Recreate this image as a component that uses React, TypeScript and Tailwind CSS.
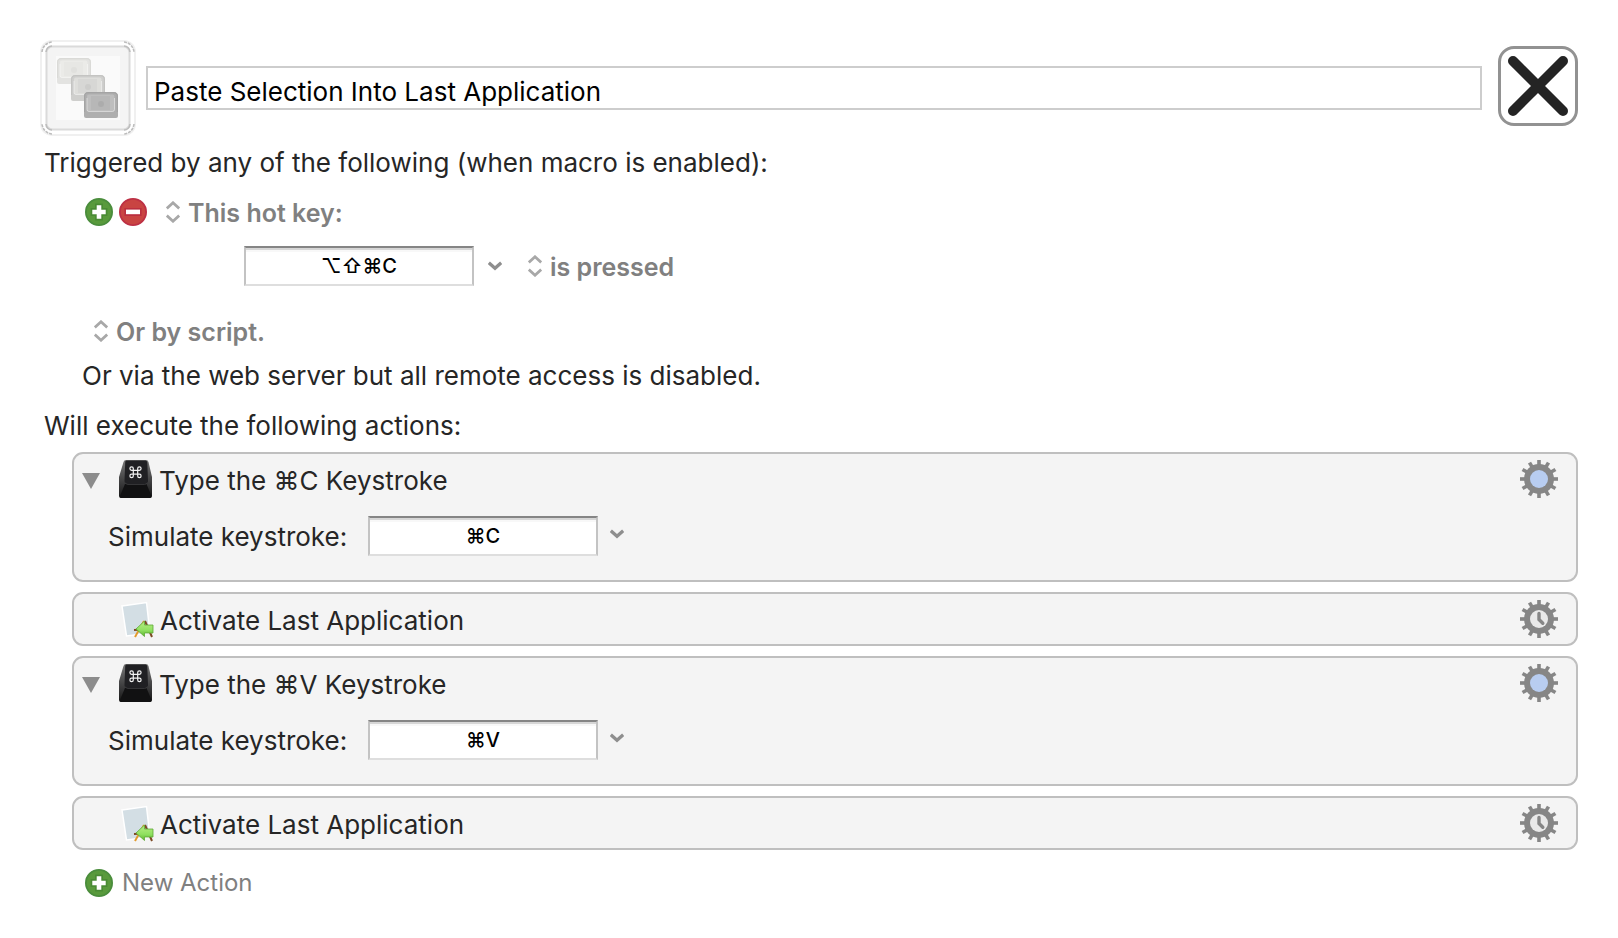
import React, { useState } from "react";

function AddIcon() {
  return (
    <svg viewBox="0 0 28 28" className="size-7" aria-hidden="true">
      <circle cx="14" cy="14" r="13.1" fill="#599a3c" stroke="#4a8d3c" strokeWidth="1.8" />
      <path d="M10 5.6h8v4.4h4.4v8H18v4.4h-8V18H5.6v-8H10z" fill="#4a8b34" />
      <path d="M11.7 7.3h4.6v4.4h4.4v4.6h-4.4v4.4h-4.6v-4.4H7.3v-4.6h4.4z" fill="#fff" />
    </svg>
  );
}

function RemoveIcon() {
  return (
    <svg viewBox="0 0 28 28" className="size-7" aria-hidden="true">
      <circle cx="14" cy="14" r="13.1" fill="#c94442" stroke="#bd3044" strokeWidth="1.8" />
      <path d="M5.4 10h17.2v8H5.4z" fill="#bb2f3f" />
      <path d="M7 11.6h14v4.6H7z" fill="#fff" />
    </svg>
  );
}

function UpDownIcon() {
  return (
    <svg viewBox="0 0 14 22" className="h-[22px] w-[14px]" fill="none" stroke="#a8a8a8" strokeWidth="2.8" aria-hidden="true">
      <path d="M.8 7.4 7 1.8l6.2 5.6M.8 14.6 7 20.2l6.2-5.6" />
    </svg>
  );
}

function ChevronIcon() {
  return (
    <svg viewBox="0 0 14 10" className="h-[10px] w-[14px]" fill="none" stroke="#8e8e8e" strokeWidth="3.4" aria-hidden="true">
      <path d="M.8 1.8 7 7.2l6.2-5.4" />
    </svg>
  );
}

function MacroIcon() {
  const keys = [
    { x: 17, y: 18, body: "#e3e3e1", top: "#ebebe8", edge: "#dadad7" },
    { x: 31, y: 35, body: "#cfcfcd", top: "#dededb", edge: "#c4c4c2" },
    { x: 44, y: 52, body: "#afafaf", top: "#bebebe", edge: "#a4a4a4" },
  ];
  return (
    <svg viewBox="0 0 96 96" className="size-24" aria-hidden="true">
      <rect x="1" y="1" width="94" height="94" rx="11" fill="#fff" stroke="#f0f0f0" strokeWidth="2" />
      <rect x="6.5" y="6.5" width="83" height="83" rx="6" fill="#f4f4f4" stroke="#dadada" strokeWidth="2" />
      <g fill="none" stroke="#bdbdbd" strokeWidth="1.6">
        <path d="M2 12a11 11 0 0 1 10-10M84 2a11 11 0 0 1 10 10M94 84a11 11 0 0 1-10 10M12 94A11 11 0 0 1 2 84" strokeDasharray="3 1" />
        <path d="M6 12a6 6 0 0 1 6-6M84 6a6 6 0 0 1 6 6M90 84a6 6 0 0 1-6 6M12 90a6 6 0 0 1-6-6" />
      </g>
      <path d="M16 16h64v64H16z" fill="#fafafa" />
      {keys.map((k) => (
        <g key={k.x} transform={`translate(${k.x} ${k.y})`}>
          <path d="M0 4.500Q0 0 4.500 0h25Q34 0 34 4.500V24q0 2-2 2H2q-2 0-2-2z" fill={k.body} />
          <path d="M.6 20V4.500Q.6.6 4.500.6h25q3.900 0 3.900 3.900V20" fill="none" stroke={k.edge} strokeWidth="1.200" />
          <rect x="3" y="2.500" width="27.500" height="17" rx="2" fill={k.top} />
          <path d="M3 6v11.500q0 2 2 2h23.500q2 0 2-2V6" fill="none" stroke="#fff" strokeOpacity=".45" />
          <rect x="7" y="4" width="19" height="14" fill={k.edge} opacity=".25" />
          <circle cx="17" cy="12" r="3" fill={k.edge} opacity=".55" />
        </g>
      ))}
    </svg>
  );
}

function KeycapIcon() {
  return (
    <svg viewBox="0 0 34 38" className="h-[38px] w-[34px]" aria-hidden="true">
      <defs>
        <linearGradient id="cap-side" x1="0" y1="0" x2="0" y2="1">
          <stop offset="0" stopColor="#777" />
          <stop offset=".6" stopColor="#3c3c3d" />
          <stop offset="1" stopColor="#151515" />
        </linearGradient>
      </defs>
      <path d="M7 0h20q2 0 2.500 2L33 17v19q0 2-2 2H2q-2 0-2-2V17L4.500 2Q5 0 7 0z" fill="url(#cap-side)" />
      <path d="M6 24h21.500L32.500 36q0 2-2 2h-28Q.5 38 1 36z" fill="#111112" />
      <path d="M7.500.5h19q1.500 0 1.800 2L29 21q0 3-3 3H8.500Q5.500 24 5.500 21l.7-18.500q0-2 1.300-2z" fill="#202023" />
      <path d="M6 22.500q1 2 3 2h16.500q2 0 3-2" fill="none" stroke="#3d3d40" strokeWidth=".8" />
      <path
        d="M14.300 10.300h4.400v3.900h-4.400zM14.300 10.300h-1.700a1.700 1.700 0 1 1 1.700-1.700zM18.700 10.300V8.600a1.700 1.700 0 1 1 1.700 1.700zM18.700 14.200h1.700a1.700 1.700 0 1 1-1.700 1.700zM14.300 14.200v1.700a1.700 1.700 0 1 1-1.700-1.700z"
        fill="none"
        stroke="#f2f2f2"
        strokeWidth="1.200"
      />
    </svg>
  );
}

function SwitchAppIcon() {
  return (
    <svg viewBox="0 0 34 38" className="h-[38px] w-[34px]" aria-hidden="true">
      <defs>
        <linearGradient id="arrow-fill" x1="0" y1="0" x2="0" y2="1">
          <stop offset="0" stopColor="#b9ee84" />
          <stop offset=".6" stopColor="#8fe060" />
          <stop offset="1" stopColor="#5cb32e" />
        </linearGradient>
      </defs>
      <path d="m2 6 24.500-3.500L30 33 6.500 36z" fill="#d3dee4" stroke="#fff" strokeWidth="1.500" />
      <path d="m25 21 7 16M33 29 14 30" stroke="#7d4a25" strokeWidth="2" />
      <path d="m24 21-9 16" stroke="#e29a2c" strokeWidth="2" />
      <path d="m16 29 8.500-8v4H33v8h-8.500v3.500z" fill="url(#arrow-fill)" stroke="#5da836" strokeWidth=".8" />
    </svg>
  );
}

const TEETH = [0, 30, 60, 90, 120, 150, 180, 210, 240, 270, 300, 330];

function GearIcon({ clock }: { clock: boolean }) {
  return (
    <svg viewBox="0 0 38 38" className="size-[38px]" aria-hidden="true">
      {TEETH.map((a) => (
        <rect key={a} x="17.200" y="0" width="3.600" height="8" fill="#868686" transform={`rotate(${a} 19 19)`} />
      ))}
      <circle cx="19" cy="19" r="15" fill="#868686" />
      <circle cx="19" cy="19" r="9" fill={clock ? "#e9e9e9" : "#b8cdf1"} />
      {clock && <path d="M19 13.500v6l3.800 3.800" fill="none" stroke="#868686" strokeWidth="3.400" strokeLinecap="round" />}
    </svg>
  );
}

function Popup({ label, text }: { label: string; text: string }) {
  return (
    <label className="flex items-center gap-2">
      <UpDownIcon />
      <select aria-label={label} className="appearance-none bg-transparent pt-[2px] text-[25px] font-semibold text-[#808080] outline-none">
        <option>{text}</option>
      </select>
    </label>
  );
}

function KeyField({ label, id, keys }: { label?: string; id: string; keys: string }) {
  return (
    <input
      id={id}
      aria-label={label}
      readOnly
      value={keys}
      className="h-10 w-[230px] border-2 border-t-[#858585] border-r-[#c3c3c3] border-b-[#dedede] border-l-[#c3c3c3] bg-white text-center text-[20px] font-medium text-black shadow-[inset_0_2px_0_#d6d6d6,inset_0_4px_0_#f8f8f8] outline-none"
    />
  );
}

function KeystrokeAction({ id, keys }: { id: string; keys: string }) {
  return (
    <li className="h-[130px] rounded-[11px] border-2 border-[#bfbfbf] bg-[#f4f4f4]">
      <div className="flex h-[50px] items-center pr-[18px] pl-2">
        <button aria-label="Collapse action" className="mr-[19px]">
          <svg viewBox="0 0 18 16" className="mt-1 h-4 w-[18px]" aria-hidden="true">
            <path d="M0 0h18L9 16z" fill="#8c8c8c" />
          </svg>
        </button>
        <KeycapIcon />
        <h2 className="ml-[6px] flex-1 pt-1">Type the {keys} Keystroke</h2>
        <button aria-label="Action options">
          <GearIcon clock={false} />
        </button>
      </div>
      <div className="flex h-[64px] items-center pl-[34px]">
        <label htmlFor={id} className="w-[260px] pt-[2px]">
          Simulate keystroke:
        </label>
        <KeyField id={id} keys={keys} />
        <button aria-label="Choose keystroke" className="mb-1 ml-3">
          <ChevronIcon />
        </button>
      </div>
    </li>
  );
}

function ActivateAction() {
  return (
    <li className="h-[54px] rounded-[11px] border-2 border-[#bfbfbf] bg-[#f4f4f4]">
      <div className="flex h-[50px] items-center pr-[18px] pl-[46px]">
        <SwitchAppIcon />
        <h2 className="ml-[6px] flex-1 pt-1">Activate Last Application</h2>
        <button aria-label="Action options">
          <GearIcon clock />
        </button>
      </div>
    </li>
  );
}

export default function App() {
  const [title, setTitle] = useState("Paste Selection Into Last Application");
  const [enabled, setEnabled] = useState(true);
  return (
    <main className="min-h-screen bg-white pt-10 pr-10 pb-8 pl-11 font-['Inter','DejaVu_Sans',sans-serif] text-[26px] leading-8 text-[#262626]">
      <header className="-ml-1 flex items-center">
        <button aria-label="Macro icon">
          <MacroIcon />
        </button>
        <input
          aria-label="Macro name"
          value={title}
          onChange={(e) => setTitle(e.target.value)}
          className="ml-[10px] h-11 min-w-0 flex-1 border-2 border-[#cdcdcd] bg-white px-[6px] pt-[6px] text-black outline-none"
        />
        <label className="relative mb-1 ml-4 size-20">
          <input
            type="checkbox"
            aria-label="Macro enabled"
            checked={enabled}
            onChange={(e) => setEnabled(e.target.checked)}
            className="block size-20 appearance-none rounded-2xl border-3 border-[#929292] bg-white"
          />
          {enabled && (
            <svg viewBox="0 0 80 80" className="pointer-events-none absolute inset-0 size-20" aria-hidden="true">
              <path d="m15 15 50 50M65 15 15 65" stroke="#242424" strokeWidth="10" strokeLinecap="round" />
            </svg>
          )}
        </label>
      </header>

      <p className="mt-[11px]">Triggered by any of the following (when macro is enabled):</p>

      <section aria-label="Triggers">
        <div className="mt-4 flex items-center pl-[41px]">
          <button aria-label="Add trigger">
            <AddIcon />
          </button>
          <button aria-label="Remove trigger" className="mr-[19px] ml-[6px]">
            <RemoveIcon />
          </button>
          <Popup label="Trigger type" text="This hot key:" />
        </div>
        <div className="mt-[17px] flex items-center pl-[200px]">
          <KeyField id="hot-key" label="Hot key" keys="⌥⇧⌘C" />
          <button aria-label="Choose hot key" className="mr-[26px] ml-[14px]">
            <ChevronIcon />
          </button>
          <Popup label="Hot key event" text="is pressed" />
        </div>
        <div className="mt-7 pl-[50px]">
          <Popup label="Script trigger" text="Or by script." />
        </div>
        <p className="mt-3 pl-[38px]">Or via the web server but all remote access is disabled.</p>
      </section>

      <p className="mt-[18px]">Will execute the following actions:</p>
      <ul className="mt-[10px] ml-7 flex flex-col gap-[10px]">
        <KeystrokeAction id="keystroke-copy" keys="⌘C" />
        <ActivateAction />
        <KeystrokeAction id="keystroke-paste" keys="⌘V" />
        <ActivateAction />
      </ul>
      <button className="mt-[17px] ml-[41px] flex items-center gap-[9px] text-[24px] text-[#808080]">
        <AddIcon />
        New Action
      </button>
    </main>
  );
}
